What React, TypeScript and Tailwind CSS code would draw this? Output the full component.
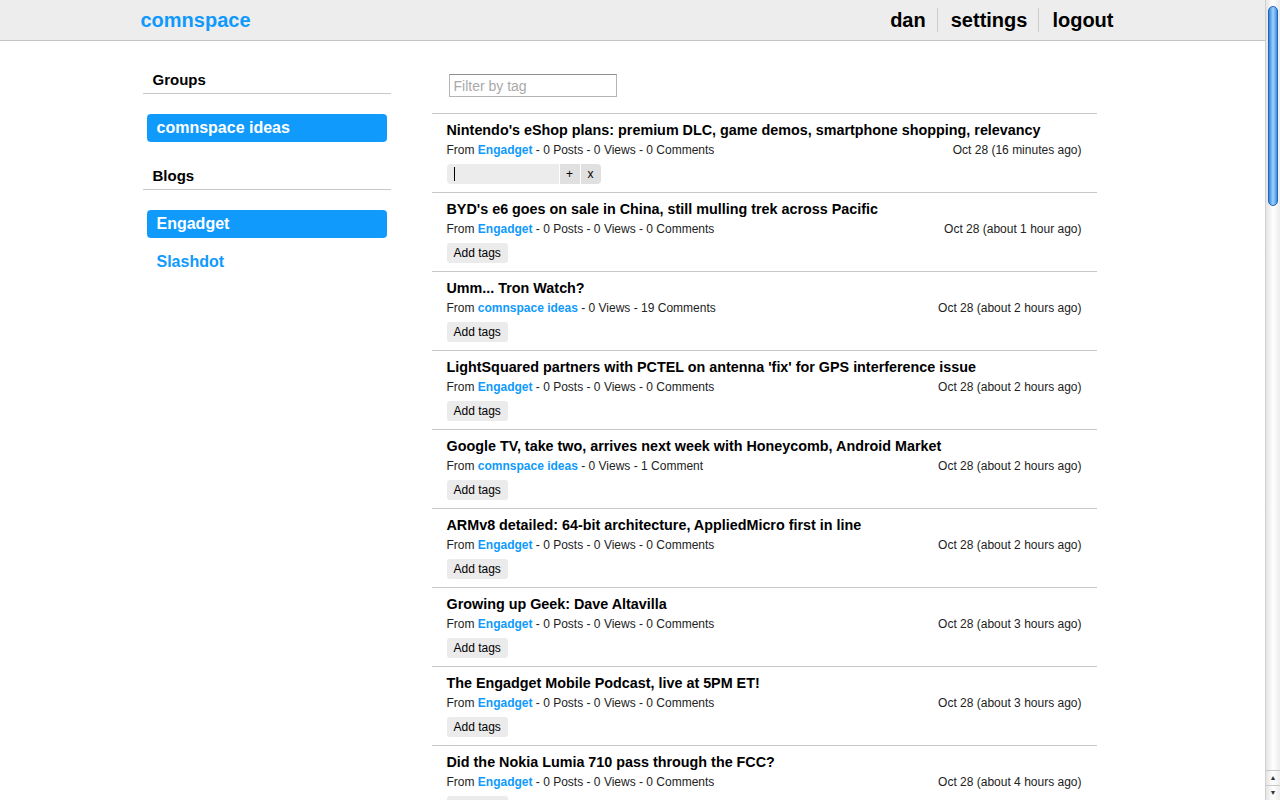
import React from 'react';

type Item = {
  title: string;
  source: string;
  posts?: number;
  views: number;
  comments: number;
  when: string;
};

const ITEMS: Item[] = [
  { title: "Nintendo's eShop plans: premium DLC, game demos, smartphone shopping, relevancy", source: 'Engadget', posts: 0, views: 0, comments: 0, when: 'Oct 28 (16 minutes ago)' },
  { title: "BYD's e6 goes on sale in China, still mulling trek across Pacific", source: 'Engadget', posts: 0, views: 0, comments: 0, when: 'Oct 28 (about 1 hour ago)' },
  { title: 'Umm... Tron Watch?', source: 'comnspace ideas', views: 0, comments: 19, when: 'Oct 28 (about 2 hours ago)' },
  { title: "LightSquared partners with PCTEL on antenna 'fix' for GPS interference issue", source: 'Engadget', posts: 0, views: 0, comments: 0, when: 'Oct 28 (about 2 hours ago)' },
  { title: 'Google TV, take two, arrives next week with Honeycomb, Android Market', source: 'comnspace ideas', views: 0, comments: 1, when: 'Oct 28 (about 2 hours ago)' },
  { title: 'ARMv8 detailed: 64-bit architecture, AppliedMicro first in line', source: 'Engadget', posts: 0, views: 0, comments: 0, when: 'Oct 28 (about 2 hours ago)' },
  { title: 'Growing up Geek: Dave Altavilla', source: 'Engadget', posts: 0, views: 0, comments: 0, when: 'Oct 28 (about 3 hours ago)' },
  { title: 'The Engadget Mobile Podcast, live at 5PM ET!', source: 'Engadget', posts: 0, views: 0, comments: 0, when: 'Oct 28 (about 3 hours ago)' },
  { title: 'Did the Nokia Lumia 710 pass through the FCC?', source: 'Engadget', posts: 0, views: 0, comments: 0, when: 'Oct 28 (about 4 hours ago)' },
];

function Header() {
  return (
    <div className="h-[41px] bg-[#ededed] border-b border-[#c4c4c4]">
      <div className="w-[984px] mx-auto h-[39px] flex items-center justify-between">
        <span className="text-[20px] font-bold text-[#0f9afc] leading-none">comnspace</span>
        <nav className="flex items-center text-[20px] font-bold text-black leading-none">
          <span className="pr-[11px] h-[24px] flex items-center">dan</span>
          <span className="pl-[13px] pr-[11px] h-[24px] flex items-center border-l border-[#cccccc]">settings</span>
          <span className="pl-[13px] pr-[11px] h-[24px] flex items-center border-l border-[#cccccc]">logout</span>
        </nav>
      </div>
    </div>
  );
}

function SideHeading({ children, className = '' }: { children: React.ReactNode; className?: string }) {
  return (
    <h3 className={`text-[15px] leading-[18px] font-bold text-black pl-[10px] pt-[1px] pb-[4px] border-b border-[#c8c8c8] ${className}`}>
      {children}
    </h3>
  );
}

function Sidebar() {
  return (
    <aside className="w-[248px] ml-[2px] pt-[29px]">
      <SideHeading>Groups</SideHeading>
      <ul className="mt-[20px] px-[4px]">
        <li className="h-[28px] rounded-[4px] bg-[#0f9afc] text-white font-bold text-[16px] flex items-center pl-[10px]">
          comnspace ideas
        </li>
      </ul>
      <SideHeading className="mt-[24px]">Blogs</SideHeading>
      <ul className="mt-[20px] px-[4px] space-y-[10px]">
        <li className="h-[28px] rounded-[4px] bg-[#0f9afc] text-white font-bold text-[16px] flex items-center pl-[10px]">
          Engadget
        </li>
        <li className="h-[28px] text-[#0f9afc] font-bold text-[16px] flex items-center pl-[10px]">
          Slashdot
        </li>
      </ul>
    </aside>
  );
}

function TagEditor() {
  return (
    <div className="mt-[6px] flex h-[20px] text-[12px]">
      <div className="w-[112px] bg-[#ececec] rounded-l-[4px] flex items-center pl-[7px]">
        <span className="w-[1px] h-[14px] bg-black" />
      </div>
      <span className="w-[20px] ml-[1px] bg-[#e0e0e0] flex items-center justify-center text-black">+</span>
      <span className="w-[20px] ml-[1px] bg-[#e0e0e0] rounded-r-[4px] flex items-center justify-center text-black">x</span>
    </div>
  );
}

function Row({ item, editing }: { item: Item; editing: boolean }) {
  return (
    <li className="border-t border-[#c8c8c8] pt-[7px] pb-[8px] px-[15px]">
      <div className="text-[14.35px] leading-[18px] font-bold text-black whitespace-nowrap">{item.title}</div>
      <div className="mt-[3px] flex justify-between text-[12px] leading-[16px] text-[#222]">
        <span>
          From <span className="font-bold text-[#0f9afc]">{item.source}</span>
          {item.posts !== undefined && ` - ${item.posts} Posts`}
          {` - ${item.views} Views - ${item.comments} ${item.comments === 1 ? 'Comment' : 'Comments'}`}
        </span>
        <span>{item.when}</span>
      </div>
      {editing ? (
        <TagEditor />
      ) : (
        <button className="block mt-[6px] h-[20px] px-[7px] rounded-[3px] bg-[#ebebeb] text-[12px] text-black leading-none">
          Add tags
        </button>
      )}
    </li>
  );
}

function Feed() {
  return (
    <main className="w-[665px] ml-[41px] pt-[33px]">
      <div className="px-[17px] mb-[16px]">
        <input
          className="block w-[168px] h-[23px] border border-[#b5b5b5] border-t-[#8e8e8e] px-[4px] text-[14px] placeholder:text-[#a9a9a9] outline-none"
          placeholder="Filter by tag"
        />
      </div>
      <ul>
        {ITEMS.map((item, i) => (
          <Row key={i} item={item} editing={i === 0} />
        ))}
      </ul>
    </main>
  );
}

function Scrollbar() {
  return (
    <div className="w-[15px] h-full flex flex-col border-l border-[#d0d0d0] bg-gradient-to-r from-[#e4e4e4] via-white to-[#ececec]">
      <div className="flex-1 px-[2px] pt-[6px]">
        <div className="h-[200px] rounded-full border border-[#1f64c0] bg-gradient-to-r from-[#2f84dc] via-[#9fd2fa] to-[#3a8fe0]" />
      </div>
      <div className="h-[15px] flex items-center justify-center border-t border-[#c8c8c8] text-[7px] text-[#333]">▲</div>
      <div className="h-[15px] flex items-center justify-center border-t border-[#c8c8c8] text-[7px] text-[#333]">▼</div>
    </div>
  );
}

export default function App() {
  return (
    <div className="h-[800px] w-[1280px] flex overflow-hidden bg-white font-['Liberation_Sans',Arial,sans-serif]">
      <div className="flex-1 min-w-0">
        <Header />
        <div className="w-[984px] mx-auto flex">
          <Sidebar />
          <Feed />
        </div>
      </div>
      <Scrollbar />
    </div>
  );
}
